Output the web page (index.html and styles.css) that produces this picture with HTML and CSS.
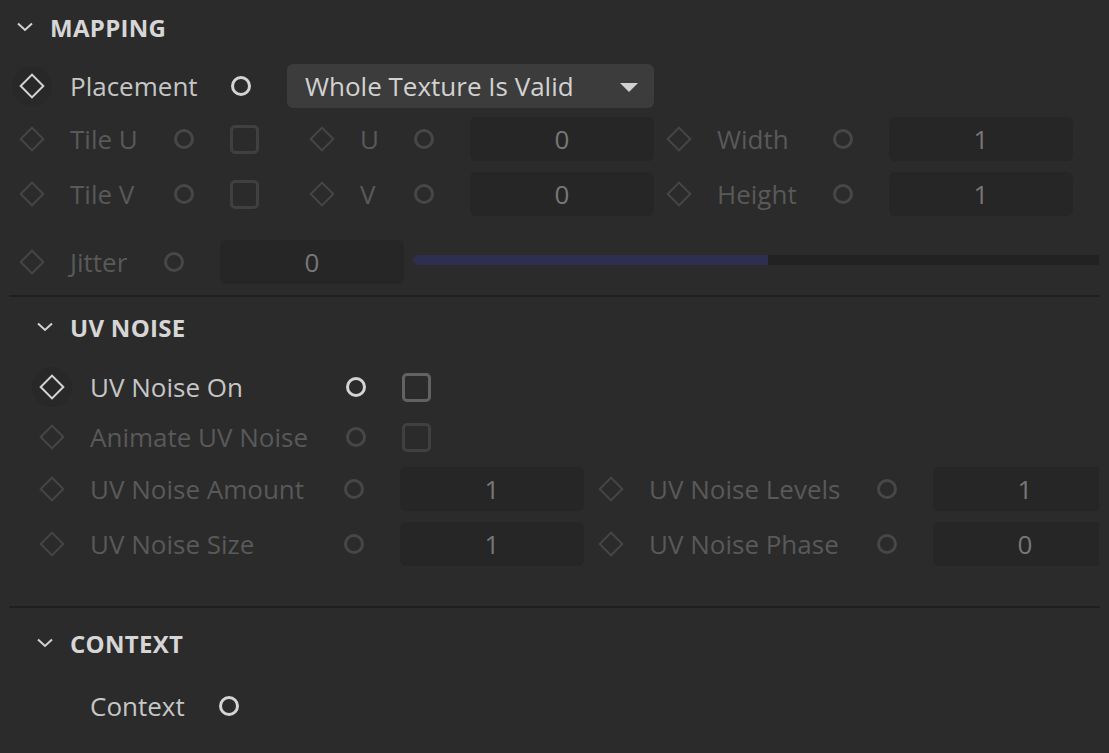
FILE: index.html
```html
<!DOCTYPE html>
<html lang="en">
<head>
    <meta charset="UTF-8">
    <title>Mapping</title>
    <link rel="stylesheet" href="styles.css">
</head>
<body>
    <div class="panel">
        <div class="group-head">
            <svg class="chevron" viewBox="0 0 16 10"><polyline points="1,1.5 8,8 15,1.5"/></svg>
            <span class="group-title">MAPPING</span>
        </div>

        <div class="row row-placement">
            <div class="param">
                <span class="key on"><i></i></span>
                <span class="label on lw-placement">Placement</span>
                <span class="anim on"></span>
                <div class="dropdown">
                    <span>Whole Texture Is Valid</span>
                    <span class="caret"></span>
                </div>
            </div>
        </div>

        <div class="row row-tile">
            <div class="param">
                <span class="key"><i></i></span>
                <span class="label lw-tile">Tile U</span>
                <span class="anim"></span>
                <span class="check"></span>
            </div>
            <div class="param gap-u">
                <span class="key"><i></i></span>
                <span class="label lw-uv">U</span>
                <span class="anim"></span>
                <div class="field">0</div>
            </div>
            <div class="param gap-w">
                <span class="key"><i></i></span>
                <span class="label lw-wh">Width</span>
                <span class="anim"></span>
                <div class="field">1</div>
            </div>
        </div>

        <div class="row row-tile2">
            <div class="param">
                <span class="key"><i></i></span>
                <span class="label lw-tile">Tile V</span>
                <span class="anim"></span>
                <span class="check"></span>
            </div>
            <div class="param gap-u">
                <span class="key"><i></i></span>
                <span class="label lw-uv">V</span>
                <span class="anim"></span>
                <div class="field">0</div>
            </div>
            <div class="param gap-w">
                <span class="key"><i></i></span>
                <span class="label lw-wh">Height</span>
                <span class="anim"></span>
                <div class="field">1</div>
            </div>
        </div>

        <div class="row row-jitter">
            <div class="param">
                <span class="key"><i></i></span>
                <span class="label lw-jitter">Jitter</span>
                <span class="anim"></span>
                <div class="field">0</div>
            </div>
            <div class="slider">
                <div class="slider-fill" style="width: 51.4%"></div>
            </div>
        </div>

        <div class="divider div-1"></div>

        <div class="sub">
            <div class="group-head head-uv">
                <svg class="chevron" viewBox="0 0 16 10"><polyline points="1,1.5 8,8 15,1.5"/></svg>
                <span class="group-title">UV NOISE</span>
            </div>

            <div class="row row-uvon">
                <div class="param">
                    <span class="key on"><i></i></span>
                    <span class="label on lw-uvn">UV Noise On</span>
                    <span class="anim on"></span>
                    <span class="check on"></span>
                </div>
            </div>

            <div class="row row-anim">
                <div class="param">
                    <span class="key"><i></i></span>
                    <span class="label lw-uvn">Animate UV Noise</span>
                    <span class="anim"></span>
                    <span class="check"></span>
                </div>
            </div>

            <div class="row row-amount">
                <div class="param">
                    <span class="key"><i></i></span>
                    <span class="label lw-uvn2">UV Noise Amount</span>
                    <span class="anim"></span>
                    <div class="field">1</div>
                </div>
                <div class="param gap-lv">
                    <span class="key"><i></i></span>
                    <span class="label lw-lv">UV Noise Levels</span>
                    <span class="anim"></span>
                    <div class="field field-end">1</div>
                </div>
            </div>

            <div class="row row-size">
                <div class="param">
                    <span class="key"><i></i></span>
                    <span class="label lw-uvn2">UV Noise Size</span>
                    <span class="anim"></span>
                    <div class="field">1</div>
                </div>
                <div class="param gap-lv">
                    <span class="key"><i></i></span>
                    <span class="label lw-lv">UV Noise Phase</span>
                    <span class="anim"></span>
                    <div class="field field-end">0</div>
                </div>
            </div>
        </div>

        <div class="divider div-2"></div>

        <div class="sub">
            <div class="group-head head-ctx">
                <svg class="chevron" viewBox="0 0 16 10"><polyline points="1,1.5 8,8 15,1.5"/></svg>
                <span class="group-title">CONTEXT</span>
            </div>
            <div class="row row-ctx">
                <div class="param">
                    <span class="key blank"></span>
                    <span class="label on lw-ctx">Context</span>
                    <span class="anim on"></span>
                </div>
            </div>
        </div>
    </div>
</body>
</html>
```

FILE: styles.css
```css
body {
    margin: 0;
    background-color: #2b2b2b;
    font-family: 'Open Sans', 'Noto Sans', sans-serif;
    color: #c6c6c6;
    overflow: hidden;
}
.panel {
    padding-left: 12px;
}
.group-head {
    display: flex;
    align-items: center;
    height: 54px;
}
.chevron {
    width: 16px;
    height: 10px;
    margin-left: 5px;
    margin-right: 17px;
    fill: none;
    stroke: #d2d2d2;
    stroke-width: 2;
}
.group-title {
    font-size: 24px;
    font-weight: bold;
    color: #d6d6d6;
    letter-spacing: 0.3px;
}
.row {
    display: flex;
    align-items: center;
    height: 46px;
}
.param {
    display: flex;
    align-items: center;
    height: 100%;
}
.key {
    width: 40px;
    height: 40px;
    border-radius: 50%;
    display: flex;
    align-items: center;
    justify-content: center;
    flex-shrink: 0;
}
.key i {
    display: block;
    width: 14px;
    height: 14px;
    border: 2px solid #464646;
    transform: rotate(45deg);
}
.key.on {
    background-color: #282828;
}
.key.on i {
    border-color: #d4d4d4;
}
.label {
    margin-left: 18px;
    font-size: 26px;
    color: #595959;
    white-space: nowrap;
}
.label.on {
    color: #c6c6c6;
}
.anim {
    width: 20px;
    height: 20px;
    box-sizing: border-box;
    border: 3px solid #474747;
    border-radius: 50%;
    margin-right: 36px;
    flex-shrink: 0;
}
.anim.on {
    border-color: #d4d4d4;
}
.check {
    width: 29px;
    height: 29px;
    box-sizing: border-box;
    border: 3px solid #404040;
    border-radius: 5px;
}
.check.on {
    border-color: #626262;
}
.field {
    width: 184px;
    height: 44px;
    box-sizing: border-box;
    background-color: #262626;
    border-radius: 6px;
    font-size: 26px;
    color: #777777;
    display: flex;
    align-items: center;
    justify-content: center;
}
.field-end {
    width: 166px;
    padding-left: 18px;
    border-radius: 6px 0 0 6px;
}
.dropdown {
    width: 367px;
    height: 44px;
    box-sizing: border-box;
    background-color: #3c3c3c;
    border-radius: 6px;
    padding: 0 16px 0 18px;
    display: flex;
    align-items: center;
    justify-content: space-between;
    font-size: 26px;
    color: #d2d2d2;
}
.caret {
    width: 0;
    height: 0;
    border-left: 9px solid transparent;
    border-right: 9px solid transparent;
    border-top: 9px solid #d0d0d0;
    margin-top: 3px;
}

/* label column widths */
.lw-placement { width: 161px; }
.lw-tile { width: 104px; }
.lw-uv { width: 54px; }
.lw-wh { width: 116px; }
.lw-jitter { width: 94px; }
.lw-uvn { width: 256px; }
.lw-uvn2 { width: 254px; }
.lw-lv { width: 228px; }
.lw-ctx { width: 129px; }

.gap-u { margin-left: 43px; }
.gap-w { margin-left: 5px; }
.gap-lv { margin-left: 7px; }

.row-placement { margin-top: 10px; height: 44px; }
.row-tile { margin-top: 8px; }
.row-tile2 { margin-top: 9px; }
.row-jitter { margin-top: 22px; }

.slider {
    position: relative;
    width: 682px;
    height: 10px;
    margin-left: 13px;
    margin-top: -5px;
    background-color: #222222;
}
.slider-fill {
    height: 100%;
    background-color: #2e2e50;
}
.slider-fill::before {
    content: "";
    position: absolute;
    left: -5px;
    top: 0;
    border-top: 5px solid transparent;
    border-bottom: 5px solid transparent;
    border-right: 5px solid #2e2e50;
}

.divider {
    height: 2px;
    background-color: #1f1f1f;
    margin-left: -3px;
    width: 1091px;
}
.div-1 { margin-top: 10px; }
.div-2 { margin-top: 40px; }

.sub {
    padding-left: 20px;
}
.head-uv { height: 60px; }
.head-ctx { height: 70px; }
.row-uvon { margin-top: 8px; height: 44px; }
.row-anim { margin-top: 6px; height: 44px; }
.row-amount { margin-top: 8px; height: 44px; }
.row-size { margin-top: 11px; height: 44px; }
.row-ctx { margin-top: 6px; height: 44px; }
```
